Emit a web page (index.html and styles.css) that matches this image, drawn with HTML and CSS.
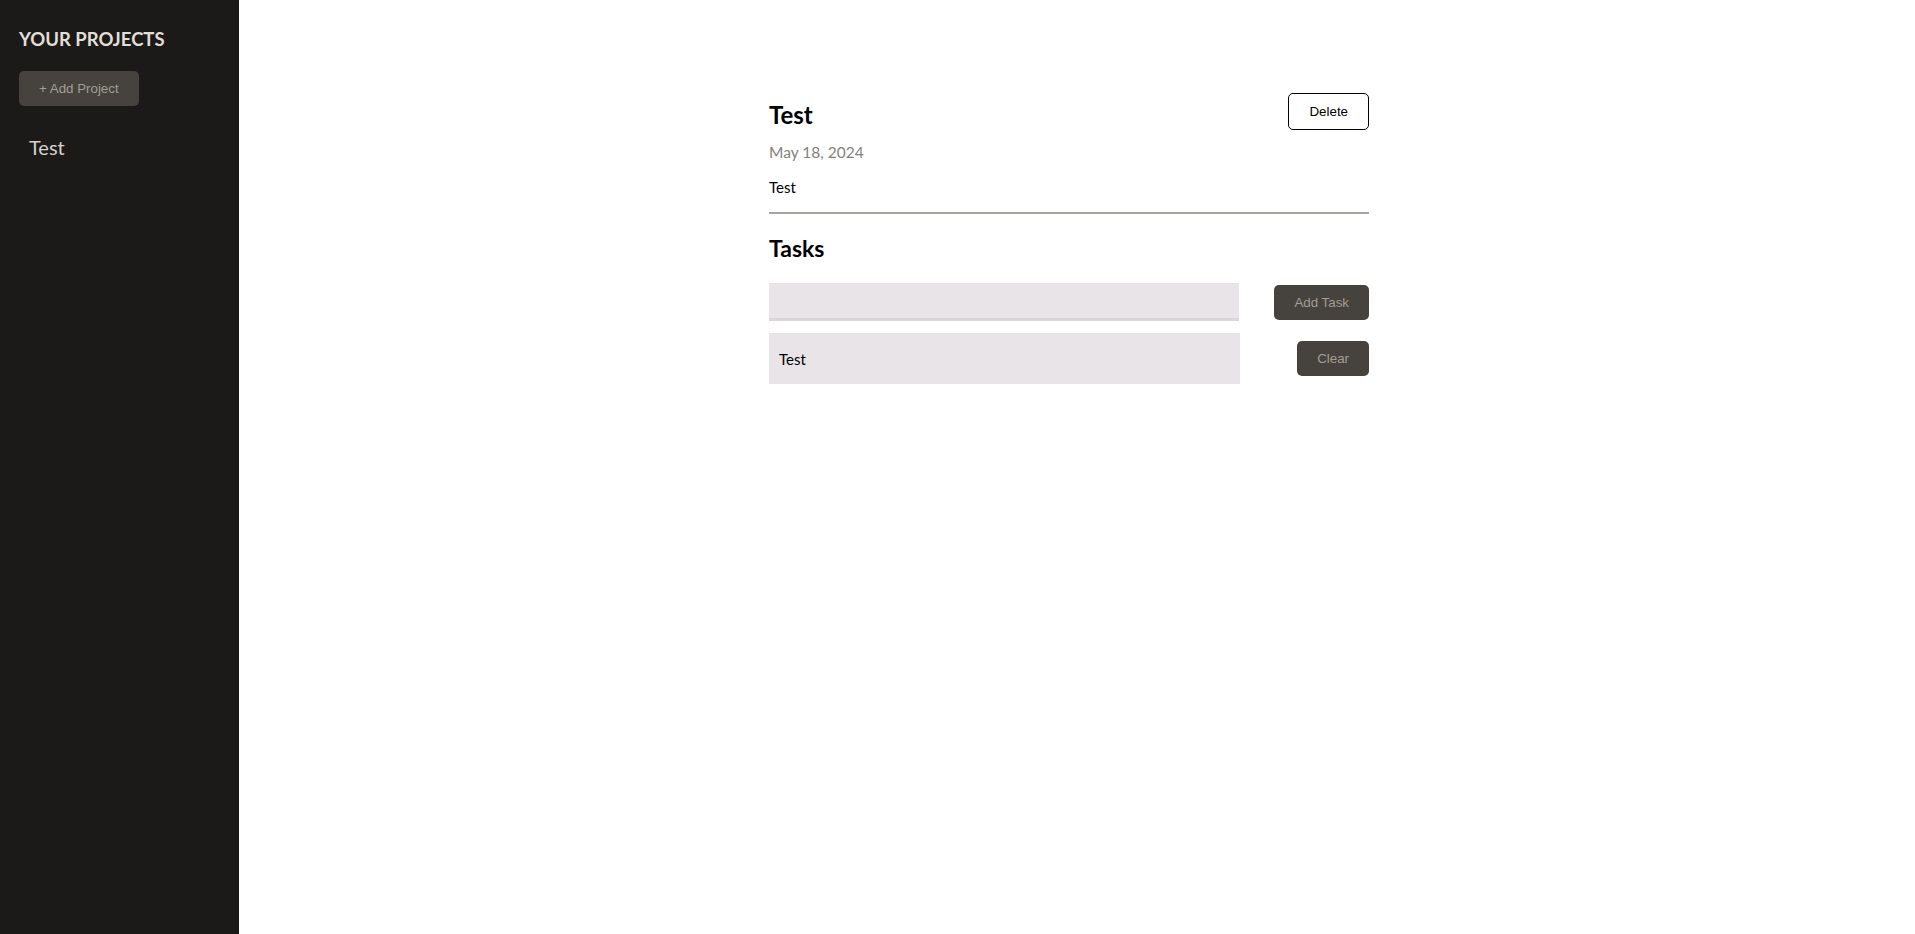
FILE: index.html
```html
<!DOCTYPE html>
<html lang="en">
<head>
<meta charset="utf-8">
<title>Projects</title>
<link rel="stylesheet" href="styles.css">
</head>
<body>
  <aside class="sidebar">
    <h2 class="sidebar-title">YOUR PROJECTS</h2>
    <button class="btn-dark add-project">+ Add Project</button>
    <ul class="project-list">
      <li class="project-item">Test</li>
    </ul>
  </aside>
  <main class="main">
    <section class="project">
      <header class="project-header">
        <div class="header-top">
          <h1 class="project-title">Test</h1>
          <button class="btn-outline">Delete</button>
        </div>
        <p class="project-date">May 18, 2024</p>
        <p class="project-desc">Test</p>
      </header>
      <h2 class="tasks-title">Tasks</h2>
      <div class="task-form">
        <input class="task-input" type="text">
        <button class="btn-dark">Add Task</button>
      </div>
      <ul class="task-list">
        <li class="task-row">
          <span class="task-name">Test</span>
          <button class="btn-dark">Clear</button>
        </li>
      </ul>
    </section>
  </main>
</body>
</html>
```

FILE: styles.css
```css
* { box-sizing: border-box; }

html, body {
  margin: 0;
  padding: 0;
  height: 100%;
}

body {
  display: flex;
  min-height: 100vh;
  background: #ffffff;
  font-family: Lato, "Open Sans", sans-serif;
  color: #000;
}

.sidebar {
  width: 239px;
  flex-shrink: 0;
  background: #1c1a19;
  padding: 28px 19px 0 19px;
}

.sidebar-title {
  margin: 0;
  font-size: 18.5px;
  line-height: 23px;
  font-weight: 700;
  color: #e2ded8;
}

.btn-dark {
  font-family: "Liberation Sans", Arial, sans-serif;
  font-size: 13.33px;
  line-height: 19px;
  padding: 8px 20px;
  border: none;
  border-radius: 5px;
  background: #46423d;
  color: #a29d96;
  cursor: pointer;
}

.add-project {
  margin-top: 20px;
  display: block;
}

.project-list {
  list-style: none;
  margin: 25px 0 0 0;
  padding: 0;
}

.project-item {
  padding: 4px 10px;
  font-size: 20px;
  line-height: 24px;
  color: #d6d3cd;
}

.main {
  flex: 1;
}

.project {
  width: 600px;
  margin-left: 530px;
  padding-top: 93px;
}

.project-header {
  padding-bottom: 16px;
  border-bottom: 2px solid #a8a4a0;
}

.header-top {
  display: flex;
  justify-content: space-between;
  align-items: flex-start;
}

.project-title {
  margin: 7px 0 0 0;
  font-size: 24px;
  line-height: 29px;
  font-weight: 700;
}

.btn-outline {
  font-family: "Liberation Sans", Arial, sans-serif;
  font-size: 13.33px;
  line-height: 19px;
  padding: 8px 20px;
  border: 1px solid #000;
  border-radius: 5px;
  background: #fff;
  color: #000;
}

.project-date {
  margin: 13px 0 0 0;
  font-size: 15.5px;
  line-height: 19px;
  color: #85807b;
}

.project-desc {
  margin: 16px 0 0 0;
  font-size: 15px;
  line-height: 18px;
}

.tasks-title {
  margin: 21px 0 0 0;
  font-size: 23px;
  line-height: 27px;
  font-weight: 700;
}

.task-form {
  margin-top: 21px;
  display: flex;
  justify-content: space-between;
  align-items: center;
}

.task-input {
  width: 470px;
  height: 38px;
  border: none;
  border-bottom: 3px solid #d9d5d8;
  background: #e8e4e7;
  padding: 0 8px;
  font-family: inherit;
  font-size: 15px;
  outline: none;
}

.task-list {
  list-style: none;
  margin: 12px 0 0 0;
  padding: 0;
}

.task-row {
  display: flex;
  justify-content: space-between;
  align-items: center;
}

.task-name {
  width: 471px;
  height: 51px;
  display: flex;
  align-items: center;
  padding-left: 10px;
  background: #e8e4e7;
  font-size: 15px;
}
```
